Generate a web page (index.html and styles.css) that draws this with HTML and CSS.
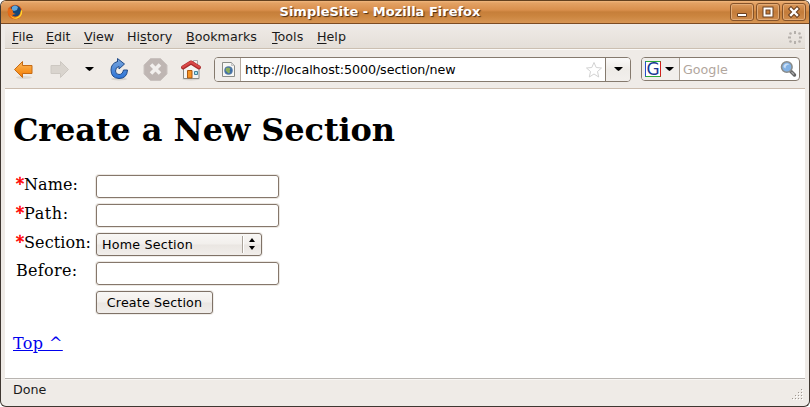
FILE: index.html
```
<!DOCTYPE html>
<html lang="en">
<head>
<meta charset="utf-8">
<title>SimpleSite - Mozilla Firefox</title>
<link rel="stylesheet" href="styles.css">
</head>
<body>
<div class="window">
  <header class="titlebar">
    <svg class="logo" width="16" height="16" viewBox="0 0 16 16">
      <circle cx="8" cy="8" r="7.3" fill="#df5a14"/>
      <circle cx="8.4" cy="7" r="5.7" fill="#174677"/>
      <path d="M5 3q3-3 6 0l-1 3-3 1-2-1z" fill="#5fa7dc"/>
      <path d="M1 3Q0 8 2 12q3 4 8 3 5-1 5.4-8L14 4q0 6-3 8-4 2-6-1l4-1Q5 9 6 7L4 4 2 5z" fill="#e56b17"/>
      <path d="M3 11q4 5 9 1 2-2 2-6l1.300 1q0 6-5 7.500-5 1-7.300-3.500z" fill="#ffd52f"/>
    </svg>
    <div class="title">SimpleSite - Mozilla Firefox</div>
    <div class="winbtns">
      <span class="wb"><svg width="22" height="16" viewBox="0 0 22 16"><path class="mark" d="M6.500 9.500h9v3h-9z"/></svg></span>
      <span class="wb"><svg width="22" height="16" viewBox="0 0 22 16"><path d="M7.500 4.500h7v7h-7z" fill="none" stroke="#6b4020" stroke-width="4"/><path d="M7.500 4.500h7v7h-7z" fill="none" stroke="#fff" stroke-width="2"/></svg></span>
      <span class="wb"><svg width="22" height="16" viewBox="0 0 22 16"><path d="M8 5l6 6M14 5l-6 6" stroke="#6b4020" stroke-width="4.500" stroke-linecap="square"/><path d="M8 5l6 6M14 5l-6 6" stroke="#fff" stroke-width="2.300" stroke-linecap="square"/></svg></span>
    </div>
  </header>
  <nav class="menubar">
    <span class="m1"><u>F</u>ile</span><span class="m2"><u>E</u>dit</span><span class="m3"><u>V</u>iew</span><span class="m4">Hi<u>s</u>tory</span><span class="m5"><u>B</u>ookmarks</span><span class="m6"><u>T</u>ools</span><span class="m7"><u>H</u>elp</span>
    <svg class="throbber" width="16" height="16" viewBox="0 0 16 16"><g fill="#b5b0ab"><path d="M7 1h2v3H7zM7 11h2v3H7zM1 6.500h3v2H1zM12 6.500h3v2h-3z"/><circle cx="3.500" cy="3.500" r="1.300"/><circle cx="12.500" cy="3.500" r="1.300"/><circle cx="3.500" cy="11.500" r="1.300"/><circle cx="12.500" cy="11.500" r="1.300"/></g></svg>
  </nav>
  <div class="toolbar">
    <svg class="tools" width="209" height="38" viewBox="0 0 209 38">
      <defs>
        <linearGradient id="or" x2="0" y2="1"><stop stop-color="#fbb85f"/><stop offset=".5" stop-color="#f89a2c"/><stop offset="1" stop-color="#f57900"/></linearGradient>
        <linearGradient id="bl" x2="0" y2="1"><stop stop-color="#7aa6dc"/><stop offset="1" stop-color="#2c74d8"/></linearGradient>
      </defs>
      <ellipse cx="19" cy="26.500" rx="8" ry="1.500" fill="#dcd7d0"/>
      <path d="M9.500 18.500l8-8v4h9.500v8h-9.500v4z" fill="url(#or)" stroke="#c66a13" stroke-linejoin="round"/>
      <path d="M63.500 18.500l-8-8v4h-9.500v8h9.500v4z" fill="#d9d4ce" stroke="#cdc8c2" stroke-linejoin="round"/>
      <path d="M80 16h9l-3 3-1.500 1-1.500-1z"/>
      <ellipse cx="114" cy="28" rx="8" ry="1.500" fill="#d7d3cd"/>
      <path d="M112.500 11V7.500l7 5.500-5.500 5v-2.500q-3.500.500-3.500 4.500 0 3.500 3.500 3.500 3.500 0 4.500-4.500h4q-.500 8.500-8.500 8.500-8-.500-8-8.500 0-6.500 6.500-8.500z" fill="url(#bl)" stroke="#204a87" stroke-linejoin="round"/>
      <path d="M145.500 7.500h10l6.500 6.500v9l-6.500 6.500h-10l-6.500-6.500v-9z" fill="#bfb6b3" stroke="#c9c2bf"/>
      <path d="M146 13.500l9 9M155 13.500l-9 9" stroke="#f2efed" stroke-width="3.600"/>
      <ellipse cx="186" cy="28" rx="9" ry="1.500" fill="#d7d3cd"/>
      <path d="M188.500 9.500h4v7h-4z" fill="#f4f4f2" stroke="#aaa"/>
      <path d="M178.500 17l7.500-5 8 5v10.500h-15.500z" fill="#f4f4f2" stroke="#888a85"/>
      <path d="M182.500 19.500h4.500v7.500h-4.500z" fill="#f79423" stroke="#ab5812"/>
      <path d="M189.500 20.500h3v3h-3z" fill="#a3eaf5" stroke="#45809a"/>
      <path d="M178 16.500l8-5 8 5" fill="none" stroke="#a92a2a" stroke-width="4" stroke-linejoin="round" stroke-linecap="round"/>
      <path d="M178 16l8-5 8 5" fill="none" stroke="#d94848" stroke-width="2.200" stroke-linecap="round"/>
    </svg>
    <div class="url">
      <div class="site"><svg width="15" height="17" viewBox="0 0 15 17"><path d="M1.500 1.500h9l3 3v11h-12z" fill="#f7f7f5" stroke="#8b8d88"/><path d="M10.500 1.500v3h3z" fill="#ddd" stroke="#aaa" stroke-width=".6"/><circle cx="7.500" cy="9.500" r="4" fill="#3c6ca8" stroke="#6685ab" stroke-width=".7"/><path d="M5 7l2.500-.500 2 1-1 2.500 1 1-2 1.500-2-2-1-1z" fill="#8daf5c"/></svg></div>
      <div class="address">http://localhost:5000/section/new</div>
      <svg class="star" width="18" height="18" viewBox="0 0 18 18"><path d="M9 1.500l2.200 5 5.300.500-4 3.500 1.200 5.500L9 13l-4.700 3 1.200-5.500-4-3.500 5.300-.500z" fill="#fff" stroke="#d2d2d2"/></svg>
      <div class="drop"><svg width="9" height="5" viewBox="0 0 9 5"><path d="M0 0h9L6 3 4.500 4 3 3z"/></svg></div>
    </div>
    <div class="search">
      <div class="engine"><span class="g">G</span><svg width="9" height="5" viewBox="0 0 9 5"><path d="M0 0h9L6 3 4.500 4 3 3z"/></svg></div>
      <div class="hint">Google</div>
      <svg class="lens" width="17" height="18" viewBox="0 0 17 18"><path d="M10.500 11l4 4" stroke="#636363" stroke-width="3.500" stroke-linecap="round"/><path d="M11.500 12l2.500 2.500" stroke="#aaa" stroke-width="1.200"/><circle cx="6.800" cy="7" r="5.300" fill="#82b2e5" stroke="#8a8c8a" stroke-width="1.600"/><path d="M3.500 7q0-3.500 4-3.500l2 1q-4 0-4 4z" fill="#c8def5"/></svg>
    </div>
  </div>
  <main class="page">
    <h1>Create a New Section</h1>
    <form class="form">
      <label><b>*</b>Name:</label><span class="field"></span>
      <label class="wide"><b>*</b>Path:</label><span class="field"></span>
      <label><b>*</b>Section:</label><span class="select"><span class="value">Home Section</span><svg width="19" height="17" viewBox="0 0 19 17"><path d="M.5 0v17" stroke="#aaa39a"/><path d="M1.500 0v17" stroke="#fff"/><path d="M7 6l3-4 3 4zM7 10h6l-3 4z"/></svg></span>
      <label class="before">Before:</label><span class="field"></span>
      <span></span><span class="button">Create Section</span>
    </form>
    <a class="top" href="#">Top ^</a>
  </main>
  <footer class="status"><span>Done</span>
    <svg width="12" height="12" viewBox="0 0 12 12"><path d="M9 0h1v1H9zM9 3h1v1H9zM6 3h1v1H6zM9 6h1v1H9zM6 6h1v1H6zM3 6h1v1H3zM9 9h1v1H9zM6 9h1v1H6zM3 9h1v1H3zM0 9h1v1H0z" fill="#9e9891"/><path d="M10 1h1v1h-1zM10 4h1v1h-1zM7 4h1v1H7zM10 7h1v1h-1zM7 7h1v1H7zM4 7h1v1H4zM10 10h1v1h-1zM7 10h1v1H7zM4 10h1v1H4zM1 10h1v1H1z" fill="#fff"/></svg>
  </footer>
</div>
</body>
</html>
```
FILE: styles.css
```
* { box-sizing: border-box; }
body { margin: 0; background: #fff; font: 12.7px/16px "DejaVu Sans", sans-serif; color: #1a1a1a; }
svg { display: block; flex: none; }
.window { width: 810px; height: 407px; display: flex; flex-direction: column; overflow: hidden; border: 1px solid #3f3731; border-top-color: #63401f; border-radius: 6px; background: #efebe7; }
.titlebar { height: 23px; flex: none; display: flex; align-items: center; padding: 0 3px 0 6px; border-bottom: 1px solid #7c4b22; background: linear-gradient(#f0b87f 0, #e3a164 2px, #d98f4c 9px, #c67f3a 11px, #cb853f 15px, #d79553 22px); }
.title { flex: 1; text-align: center; padding-left: 7px; color: #fff; font-weight: bold; font-size: 13px; text-shadow: 1px 1px 1px #4a2c12; }
.winbtns { display: flex; gap: 2px; }
.wb { width: 24px; height: 18px; border: 1px solid #85532a; border-radius: 3px; box-shadow: inset 0 0 0 1px #e2ab76; background: linear-gradient(#dc9a5d, #c37b39 50%, #d08d4d); }
.mark { fill: #fff; stroke: #6b4020; }
.menubar { height: 25px; flex: none; margin: 0 4px; display: flex; align-items: center; padding: 2px 0 0 7px; border-bottom: 1px solid #cbbfb1; background: linear-gradient(#efebe7, #e4dfd8); }
.menubar span { flex: none; }
u { text-decoration: underline; text-underline-offset: 2px; text-decoration-thickness: 1px; }
.m1 { width: 34px; } .m2 { width: 38px; } .m3 { width: 43px; } .m4 { width: 59px; } .m5 { width: 86px; } .m6 { width: 45px; } .m7 { width: 40px; }
.throbber { margin: 1px 2px 0 auto; }
.toolbar { height: 40px; flex: none; margin: 0 4px; padding-top: 1px; display: flex; border-top: 1px solid #fbfaf8; border-bottom: 1px solid #cbbcae; }
.url, .search { height: 25px; margin-top: 6px; display: flex; align-items: center; border: 1px solid #857a6e; border-radius: 4px; background: #fff; overflow: hidden; }
.url { width: 417px; }
.site { width: 26px; height: 23px; padding: 3px 6px; background: #f1eeeb; border-right: 1px solid #b5aaa0; }
.address { flex: 1; padding-left: 4px; color: #000; letter-spacing: -.07px; }
.star { margin-right: 2px; }
.drop { width: 25px; height: 23px; display: flex; align-items: center; justify-content: center; border-left: 1px solid #857a6e; background: linear-gradient(#faf9f8, #eeebe7 50%, #f2efec); }
.search { width: 159px; height: 24px; margin-left: 10px; }
.engine { width: 38px; height: 22px; display: flex; align-items: center; gap: 4px; padding-left: 3px; background: #f1eeeb; border-right: 1px solid #a99e92; }
.g { width: 16px; height: 16px; background: #fff; border: 1px solid; border-color: #2faa38 #d2201d #2faa38 #244fcb; font: 17px/14px "DejaVu Sans", sans-serif; color: #1b3794; text-align: center; }
.hint { flex: 1; padding: 1px 0 0 3px; color: #b1a69d; }
.lens { margin-right: 2px; }
.page { flex: 1; margin: 0 4px; padding: 0 8px; background: #fff; color: #000; font: 16px/19px "DejaVu Serif", serif; }
h1 { margin: 22px 0 25px; font-size: 32px; line-height: 38px; font-weight: bold; letter-spacing: -.12px; }
.form { display: grid; grid-template-columns: 80px 184px; grid-template-rows: 29px 29px 29px 29px 29px; padding-left: 3px; align-items: start; }
.form label { white-space: nowrap; padding-top: 1px; letter-spacing: .1px; }
.form .wide { letter-spacing: .6px; }
.form .before { padding-top: 0; letter-spacing: .3px; }
.form b { font-weight: normal; color: #f00; letter-spacing: 0; -webkit-text-stroke: .5px #f00; }
.field { width: 183px; height: 23px; margin-top: 1px; border: 1px solid #85776b; border-radius: 3px; box-shadow: 0 0 0 1px #ece8e3; }
.select, .button { font: 12.7px/20px "DejaVu Sans", sans-serif; height: 23px; margin-top: 1px; border: 1px solid #7f7267; border-radius: 3px; background: linear-gradient(#f8f7f5, #f2efec 48%, #eae6e2 52%, #f1eeeb); box-shadow: 0 0 0 1px #f0eeeb; }
.select { width: 166px; display: flex; align-items: center; padding-left: 5px; }
.value { flex: 1; letter-spacing: .2px; }
.button { width: 117px; padding-top: 1px; text-align: center; letter-spacing: .15px; }
.top { display: inline-block; margin-top: 15px; color: #00e; text-decoration: underline; letter-spacing: .4px; }
.status { height: 28px; flex: none; margin: 0 4px; display: flex; justify-content: space-between; padding: 3px 1px 0 8px; border-top: 1px solid #b8b4b0; box-shadow: inset 0 1px #f8f6f4; }
.status svg { margin-top: 7px; }
```
